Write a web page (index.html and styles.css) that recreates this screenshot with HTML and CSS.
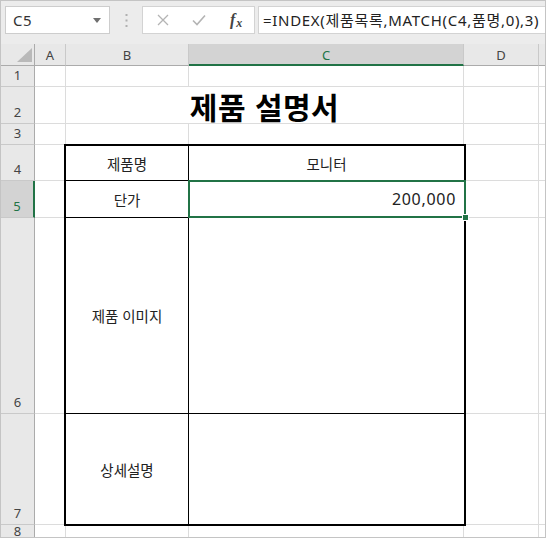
FILE: index.html
```html
<!DOCTYPE html>
<html lang="ko">
<head>
<meta charset="utf-8">
<title>제품 설명서</title>
<link rel="stylesheet" href="styles.css">
</head>
<body>
<div class="frame">
  <div class="toolbar">
    <div class="namebox">
      <span class="ref">C5</span>
      <svg class="caret" width="8" height="5" viewBox="0 0 8 5"><path d="M0 0H8L4 5Z" fill="#6f6f6f"/></svg>
    </div>
    <div class="grip">
      <svg width="3" height="13" viewBox="0 0 3 13"><rect x="0.5" y="0" width="2" height="2" fill="#b0b0b0"/><rect x="0.5" y="5.5" width="2" height="2" fill="#b0b0b0"/><rect x="0.5" y="11" width="2" height="2" fill="#b0b0b0"/></svg>
    </div>
    <div class="fxbox">
      <svg class="btn" width="12" height="12" viewBox="0 0 12 12"><path d="M1 1L11 11M11 1L1 11" stroke="#b4b4b4" stroke-width="1.3" fill="none"/></svg>
      <svg class="btn" width="14" height="12" viewBox="0 0 14 12"><path d="M1 6.5L5 10.5L13 1.5" stroke="#b4b4b4" stroke-width="1.6" fill="none"/></svg>
      <span class="fx"><i>f</i><i class="sub">x</i></span>
    </div>
    <div class="formula">=INDEX(제품목록,MATCH(C4,품명,0),3)</div>
  </div>

  <div class="sheet">
    <div class="corner"><svg width="15" height="14" viewBox="0 0 15 14"><path d="M15 0V14H0Z" fill="#b9b9b9"/></svg></div>
    <div class="colhdr">A</div>
    <div class="colhdr">B</div>
    <div class="colhdr sel">C</div>
    <div class="colhdr">D</div>
    <div class="colhdr last"></div>

    <div class="rowhdr">1</div><div class="cell"></div><div class="cell"></div><div class="cell"></div><div class="cell"></div><div class="cell last"></div>

    <div class="rowhdr">2</div><div class="cell"></div>
    <div class="title">제품 설명서</div>
    <div class="cell"></div><div class="cell last"></div>

    <div class="rowhdr">3</div><div class="cell"></div><div class="cell"></div><div class="cell"></div><div class="cell"></div><div class="cell last"></div>

    <div class="rowhdr">4</div><div class="cell"></div>
    <div class="spec">
      <div class="sc lab">제품명</div>
      <div class="sc val center">모니터</div>
      <div class="sc lab">단가</div>
      <div class="sc val right active">200,000<span class="handle"></span></div>
      <div class="sc lab">제품 이미지</div>
      <div class="sc val"></div>
      <div class="sc lab lastrow">상세설명</div>
      <div class="sc val lastrow"></div>
    </div>
    <div class="cell"></div><div class="cell last"></div>

    <div class="rowhdr sel">5</div><div class="cell"></div><div class="cell"></div><div class="cell last"></div>
    <div class="rowhdr">6</div><div class="cell"></div><div class="cell"></div><div class="cell last"></div>
    <div class="rowhdr">7</div><div class="cell"></div><div class="cell"></div><div class="cell last"></div>
    <div class="rowhdr">8</div><div class="cell"></div><div class="cell"></div><div class="cell"></div><div class="cell"></div><div class="cell last"></div>
  </div>
</div>
</body>
</html>
```

FILE: styles.css
```css
* { box-sizing: border-box; }
html, body { margin: 0; padding: 0; background: #ffffff; }
body {
  font-family: "Noto Sans", "Noto Sans CJK KR", sans-serif;
  color: #222;
}
.frame {
  width: 546px;
  height: 538px;
  border: 1px solid #c4c4c4;
  overflow: hidden;
  display: flex;
  flex-direction: column;
  background: #fff;
}

/* ---------- formula bar ---------- */
.toolbar {
  height: 43px;
  flex: none;
  background: #ececec;
  display: flex;
  align-items: flex-start;
  padding-top: 5px;
}
.namebox {
  margin-left: 4px;
  width: 105px;
  height: 28px;
  background: #fff;
  border: 1px solid #cdcdcd;
  display: flex;
  align-items: center;
  justify-content: space-between;
  padding: 0 8px 0 7px;
}
.ref { font-size: 15px; color: #333; letter-spacing: 0.4px; }
.caret { margin-top: 1px; }
.grip {
  width: 32px;
  height: 28px;
  display: flex;
  align-items: center;
  justify-content: center;
}
.fxbox {
  width: 113px;
  height: 28px;
  background: #fff;
  border: 1px solid #d3d3d3;
  display: flex;
  align-items: center;
  padding-left: 14px;
}
.fxbox .btn:first-child { margin-right: 23px; }
.fxbox .btn:nth-child(2) { margin-right: 24px; }
.fx {
  font-family: "Liberation Serif", "DejaVu Serif", serif;
  color: #444;
  font-size: 16px;
  line-height: 1;
  font-weight: 700;
}
.fx i { font-style: italic; }
.fx .sub { font-size: 12px; position: relative; top: 2px; margin-left: 1px; }
.formula {
  margin-left: 3px;
  flex: 1;
  height: 28px;
  background: #fff;
  border: 1px solid #d3d3d3;
  border-right: none;
  font-size: 15px;
  line-height: 26px;
  padding-left: 4px;
  color: #222;
  white-space: nowrap;
  overflow: hidden;
  letter-spacing: 0.7px;
}

/* ---------- sheet grid ---------- */
.sheet {
  flex: 1;
  display: grid;
  grid-template-columns: 34px 31px 123px 275px 75px 1fr;
  grid-template-rows: 22px 21px 37px 21px 36px 37px 196px 111px 1fr;
  font-size: 13px;
}
.corner {
  background: #e8e8e8;
  border-right: 1px solid #ababab;
  border-bottom: 1px solid #ababab;
  display: flex;
  align-items: flex-end;
  justify-content: flex-end;
  padding: 0 2px 3px 0;
}
.colhdr {
  background: #e8e8e8;
  border-right: 1px solid #c9c9c9;
  border-bottom: 1px solid #ababab;
  display: flex;
  align-items: center;
  justify-content: center;
  color: #444;
  font-size: 13px;
}
.colhdr.last { border-right: none; }
.colhdr.sel {
  background: #d3d3d3;
  color: #217346;
  border-bottom: 2px solid #217346;
  padding-top: 1px;
}
.rowhdr {
  background: #e8e8e8;
  border-right: 1px solid #ababab;
  border-bottom: 1px solid #c9c9c9;
  display: flex;
  align-items: flex-end;
  justify-content: center;
  color: #444;
  font-size: 13px;
  line-height: 1;
  padding-bottom: 4px;
}
.rowhdr.sel {
  background: #d3d3d3;
  color: #217346;
  border-right: 2px solid #217346;
}
.cell {
  border-right: 1px solid #dcdcdc;
  border-bottom: 1px solid #dcdcdc;
}
.cell.last { border-right: none; }

.title {
  grid-column: 3 / 5;
  border-bottom: 1px solid #dcdcdc;
  border-right: 1px solid #dcdcdc;
  font-family: "Noto Sans CJK KR", sans-serif;
  font-weight: 700;
  font-size: 30px;
  color: #000;
  display: flex;
  align-items: center;
  justify-content: center;
  letter-spacing: 0.5px;
  padding-top: 1px;
}

/* ---------- spec table ---------- */
.spec {
  grid-column: 3 / 5;
  grid-row: 5 / 9;
  margin: -1px -2px -1px -2px;
  border: 2px solid #000;
  display: grid;
  grid-template-columns: 123px 1fr;
  grid-template-rows: 35px 37px 196px 1fr;
  background: #fff;
  position: relative;
  z-index: 1;
}
.sc {
  border-bottom: 1px solid #000;
  display: flex;
  align-items: center;
  font-family: "Noto Sans", "Noto Sans CJK KR", sans-serif;
  font-size: 14.5px;
  color: #222;
}
.sc.lab {
  border-right: 1px solid #000;
  justify-content: center;
}
.sc.lastrow { border-bottom: none; }
.sc.center { justify-content: center; }
.sc.right { justify-content: flex-end; padding-right: 8px; font-size: 16px; letter-spacing: 0.7px; }
.sc.active { position: relative; }
.sc.active::before {
  content: "";
  position: absolute;
  top: -1px;
  left: -1px;
  right: -2px;
  bottom: -1px;
  border: 2px solid #217346;
  pointer-events: none;
}
.handle {
  position: absolute;
  right: -5px;
  bottom: -4px;
  width: 7px;
  height: 7px;
  background: #217346;
  border: 1px solid #fff;
  z-index: 2;
}
```
